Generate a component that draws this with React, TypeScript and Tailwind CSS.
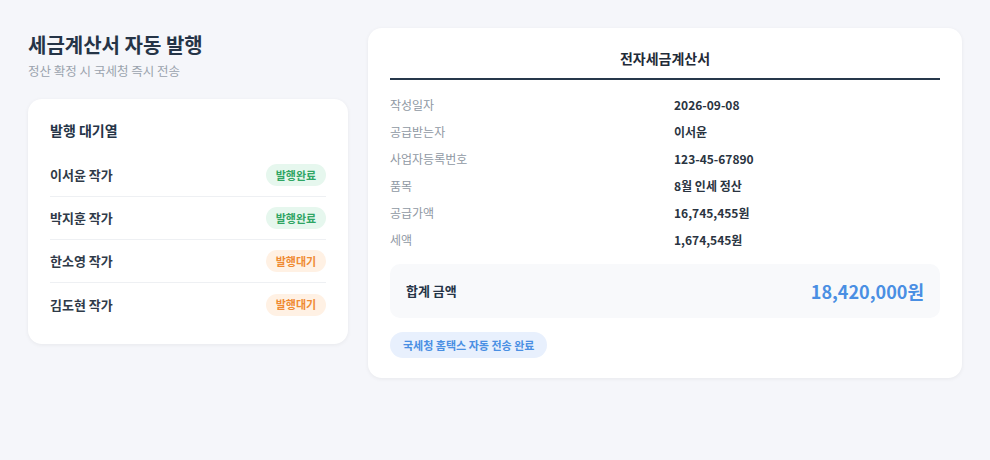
import React from "react";

const queue = [
  { name: "이서윤 작가", done: true },
  { name: "박지훈 작가", done: true },
  { name: "한소영 작가", done: false },
  { name: "김도현 작가", done: false },
];

const fields = [
  ["작성일자", "2026-09-08"],
  ["공급받는자", "이서윤"],
  ["사업자등록번호", "123-45-67890"],
  ["품목", "8월 인세 정산"],
  ["공급가액", "16,745,455원"],
  ["세액", "1,674,545원"],
];

export default function App() {
  return (
    <div
      className="min-h-[460px] w-full bg-[#f5f6fa] px-[28px] pt-[28px]"
      style={{ fontFamily: '"Noto Sans CJK KR", "Noto Sans", sans-serif' }}
    >
      <div className="flex gap-[20px]">
        {/* left column: heading + queue */}
        <div className="w-[320px] shrink-0">
          <h1 className="text-[20px] font-bold leading-[34px] text-[#253447]">세금계산서 자동 발행</h1>
          <p className="text-[12.5px] leading-[18px] text-[#9aa3ad]">정산 확정 시 국세청 즉시 전송</p>

          <div className="mt-[19px] rounded-[14px] bg-white px-[22px] pb-[18px] pt-[19px] shadow-[0_1px_4px_rgba(0,0,0,0.06)]">
            <h2 className="text-[14px] font-bold leading-[24px] text-[#253447]">발행 대기열</h2>
            <ul className="mt-[12px]">
              {queue.map((q, i) => (
                <li
                  key={q.name}
                  className={`flex h-[43px] items-center justify-between ${
                    i < queue.length - 1 ? "border-b border-[#eef0f3]" : ""
                  }`}
                >
                  <span className="text-[13px] font-bold text-[#2f3a48]">{q.name}</span>
                  <span
                    className={`flex h-[22px] w-[60px] items-center justify-center rounded-full text-[11px] font-bold ${
                      q.done ? "bg-[#e6f7ee] text-[#2fa564]" : "bg-[#fff1e4] text-[#ef8a32]"
                    }`}
                  >
                    {q.done ? "발행완료" : "발행대기"}
                  </span>
                </li>
              ))}
            </ul>
          </div>
        </div>

        {/* right column: invoice */}
        <div className="w-[594px] shrink-0 rounded-[14px] bg-white px-[22px] pb-[20px] pt-[18px] shadow-[0_1px_4px_rgba(0,0,0,0.06)]">
          <div className="border-b-2 border-[#26384b] pb-[8px] text-center text-[14px] font-bold leading-[24px] text-[#1f2b38]">
            전자세금계산서
          </div>
          <div className="mt-[14px] grid grid-cols-[284px_1fr] gap-y-[6px]">
            {fields.map(([k, v]) => (
              <React.Fragment key={k}>
                <div className="text-[12px] leading-[21px] text-[#8f98a3]">{k}</div>
                <div className="text-[12px] font-bold leading-[21px] text-[#2a3441]">{v}</div>
              </React.Fragment>
            ))}
          </div>
          <div className="mt-[14px] flex h-[54px] items-center justify-between rounded-[10px] bg-[#f8f9fb] px-[16px]">
            <span className="text-[13px] font-bold text-[#253447]">합계 금액</span>
            <span className="text-[18px] font-bold text-[#4a8fe3]">18,420,000원</span>
          </div>
          <div className="mt-[14px] inline-flex h-[26px] items-center rounded-full bg-[#e8f0fd] px-[13px] text-[11px] font-bold text-[#4a8fe3]">
            국세청 홈택스 자동 전송 완료
          </div>
        </div>
      </div>
    </div>
  );
}
